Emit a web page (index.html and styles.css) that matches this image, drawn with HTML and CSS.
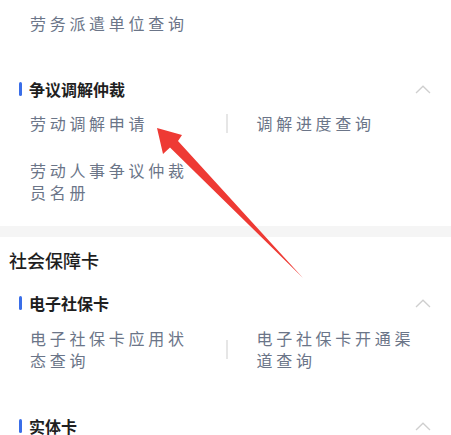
FILE: index.html
```html
<!DOCTYPE html>
<html lang="zh-CN">
<head>
<meta charset="utf-8">
<title>服务列表</title>
<link rel="stylesheet" href="styles.css">
</head>
<body>
<div class="page">
  <section class="section first">
    <div class="group partial">
      <div class="items">
        <div class="row">
          <div class="cell"><span class="label">劳务派遣单位查询</span></div>
        </div>
      </div>
    </div>
    <div class="group">
      <div class="group-head">
        <span class="bar"></span>
        <span class="group-title">争议调解仲裁</span>
        <svg class="chev" width="16" height="9" viewBox="0 0 16 9"><polyline points="1,8 8,1.2 15,8" fill="none" stroke="#cfcfcf" stroke-width="1.3"/></svg>
      </div>
      <div class="items">
        <div class="row">
          <div class="cell"><span class="label">劳动调解申请</span></div>
          <div class="cell"><span class="sep"></span><span class="label">调解进度查询</span></div>
        </div>
        <div class="row">
          <div class="cell"><span class="label">劳动人事争议仲裁员名册</span></div>
        </div>
      </div>
    </div>
  </section>
  <div class="band"></div>
  <section class="section">
    <h2 class="section-title">社会保障卡</h2>
    <div class="group">
      <div class="group-head">
        <span class="bar"></span>
        <span class="group-title">电子社保卡</span>
        <svg class="chev" width="16" height="9" viewBox="0 0 16 9"><polyline points="1,8 8,1.2 15,8" fill="none" stroke="#cfcfcf" stroke-width="1.3"/></svg>
      </div>
      <div class="items second">
        <div class="row">
          <div class="cell"><span class="label">电子社保卡应用状态查询</span></div>
          <div class="cell"><span class="sep"></span><span class="label">电子社保卡开通渠道查询</span></div>
        </div>
      </div>
    </div>
    <div class="group">
      <div class="group-head">
        <span class="bar"></span>
        <span class="group-title">实体卡</span>
        <svg class="chev" width="16" height="9" viewBox="0 0 16 9"><polyline points="1,8 8,1.2 15,8" fill="none" stroke="#cfcfcf" stroke-width="1.3"/></svg>
      </div>
    </div>
  </section>
  <svg class="arrow" width="451" height="435" viewBox="0 0 451 435">
    <polygon points="157,128 182,135 178,141 303,278 170,147.5 163,154" fill="#ee3a34"/>
  </svg>
</div>
</body>
</html>
```
FILE: styles.css
```css
html, body {
  margin: 0;
  padding: 0;
  background: #ffffff;
  overflow: hidden;
}
body {
  font-family: "Noto Sans CJK SC", "Noto Sans", sans-serif;
  color: #222222;
}
.page {
  position: relative;
  width: 451px;
  height: 435px;
  overflow: hidden;
}
.section {
  display: flex;
  flex-direction: column;
  padding-top: 11px;
}
.section.first {
  padding-top: 12px;
  padding-bottom: 23px;
}
.group + .group {
  margin-top: 44px;
}
.section.first .group + .group {
  margin-top: 44px;
}
.section-title + .group {
  margin-top: 20px;
}
.section-title {
  margin: 0;
  padding-left: 9px;
  font-size: 18px;
  line-height: 24px;
  font-weight: 500;
  color: #1e1e1e;
}
.group-head {
  display: flex;
  align-items: center;
  height: 22px;
  padding-left: 19px;
  padding-right: 20px;
}
.bar {
  width: 3px;
  height: 14px;
  border-radius: 1.5px;
  background: #3a6ee8;
  margin-right: 7px;
}
.group-title {
  flex: 1;
  font-size: 16px;
  line-height: 22px;
  font-weight: 600;
  color: #1f1f1f;
}
.chev {
  display: block;
}
.items {
  display: flex;
  flex-direction: column;
  gap: 25px;
}
.group-head + .items {
  margin-top: 12px;
}
.group-head + .items.second {
  margin-top: 13px;
}
.row {
  display: grid;
  grid-template-columns: 1fr 1fr;
}
.cell {
  display: flex;
  align-items: center;
}
.label {
  max-width: 166px;
  font-size: 16px;
  line-height: 22px;
  letter-spacing: 3.7px;
  color: #6b7588;
}
.cell:first-child .label {
  margin-left: 30px;
}
.sep {
  width: 2px;
  height: 19px;
  background: #e6e6e6;
  margin-right: 29px;
}
.band {
  height: 11px;
  background: #f5f5f5;
}
.arrow {
  position: absolute;
  left: 0;
  top: 0;
  pointer-events: none;
}
```
